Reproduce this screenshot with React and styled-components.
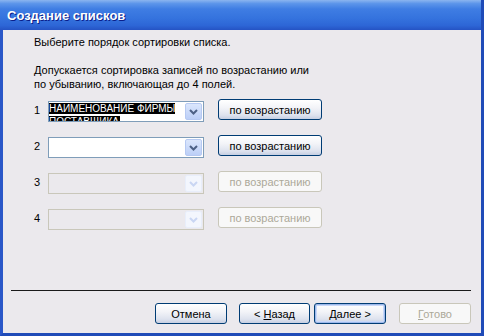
import styled, { createGlobalStyle, css } from "styled-components";

const GlobalStyle = createGlobalStyle`
  html, body {
    margin: 0;
    padding: 0;
    background: #ebe9ed;
  }
  body {
    font-family: "Liberation Sans", Arial, sans-serif;
    font-size: 11px;
    color: #000;
  }
`;

const Window = styled.div`
  width: 484px;
  height: 336px;
  display: flex;
  flex-direction: column;
  overflow: hidden;
`;

const TitleBar = styled.div`
  height: 30px;
  flex-shrink: 0;
  display: flex;
  align-items: center;
  padding-left: 7px;
  background: linear-gradient(
    to bottom,
    #8bb5ef 0%,
    #5c95ea 12%,
    #3f7de3 30%,
    #3573de 60%,
    #2d66d6 85%,
    #2553c4 100%
  );
  border-right: 3px solid #1f4bb8;
`;

const Title = styled.h1`
  margin: 0;
  font-family: "Liberation Sans", Arial, sans-serif;
  font-weight: bold;
  font-size: 13px;
  color: #fff;
  text-shadow: 1px 1px 0 #0a1e8a;
`;

const Body = styled.div`
  flex: 1;
  display: flex;
  flex-direction: column;
  background: #ebe9ed;
  border-left: 3px solid #2a57c8;
  border-right: 3px solid #1f4bb8;
  border-bottom: 3px solid #1f4bb8;
`;

const Content = styled.div`
  flex: 1;
  padding: 5px 0 0 31px;
`;

const Text = styled.p`
  margin: 0 0 ${(p) => p.$gap || 0}px;
  line-height: 14px;
`;

const Rows = styled.div`
  margin-top: 10px;
  display: flex;
  flex-direction: column;
  gap: 15px;
`;

const Row = styled.div`
  display: flex;
  align-items: flex-start;
  height: 21px;
`;

const Num = styled.span`
  width: 14px;
  padding-top: 3px;
`;

const Combo = styled.div`
  width: 156px;
  height: 21px;
  box-sizing: border-box;
  display: flex;
  border: 1px solid ${(p) => (p.$disabled ? "#c9c7ba" : "#7f9db9")};
  background: ${(p) => (p.$disabled ? "#ebe9ed" : "#fff")};
`;

const ComboText = styled.div`
  flex: 1;
  overflow: hidden;
  white-space: nowrap;
  line-height: 13px;
  font-size: 10px;
`;

const Selected = styled.span`
  background: #000;
  color: #fff;
  padding-right: 1px;
`;

const DropButton = styled.div`
  width: 17px;
  margin: 1px;
  box-sizing: border-box;
  display: flex;
  align-items: center;
  justify-content: center;
  border-radius: 2px;
  ${(p) =>
    p.$disabled
      ? css`
          background: #f3f6fd;
          border: 1px solid #e8eefb;
        `
      : css`
          background: linear-gradient(to bottom, #dbe6fc, #bccff7);
          border: 1px solid #b6c9f2;
        `}
`;

const Chevron = ({ disabled }) => (
  <svg width="9" height="6" viewBox="0 0 9 6">
    <path
      d="M1 1 L4.5 4.5 L8 1"
      fill="none"
      stroke={disabled ? "#c9d6f3" : "#4d6185"}
      strokeWidth="2"
    />
  </svg>
);

const Button = styled.button`
  box-sizing: border-box;
  height: 21px;
  width: ${(p) => p.$w || 72}px;
  margin-left: ${(p) => p.$ml || 0}px;
  padding: 0;
  font-family: "Liberation Sans", Arial, sans-serif;
  font-size: 11px;
  border-radius: 3px;
  cursor: default;
  ${(p) =>
    p.disabled
      ? css`
          background: #f8f8f8;
          border: 1px solid #c9c7ba;
          color: #aca899;
        `
      : css`
          background: linear-gradient(to bottom, #ffffff 0%, #f3f4f8 40%, #dde2ee 80%, #c6cfe2 100%);
          border: 1px solid #003c74;
          color: #000;
        `}
  ${(p) =>
    p.$default &&
    css`
      box-shadow: inset 0 0 0 1px #9db9eb, inset 0 0 0 2px #c9d8f8;
    `}
`;

const RowButton = styled(Button)`
  margin-left: 14px;
  margin-top: -2px;
  width: 104px;
`;

const Footer = styled.div`
  padding: 0 10px 0 8px;
`;

const Separator = styled.div`
  height: 1px;
  background: #1a1a1a;
`;

const ButtonBar = styled.div`
  display: flex;
  justify-content: flex-end;
  padding: 12px 0 9px;
`;

const U = styled.span`
  text-decoration: underline;
`;

const rows = [
  { n: 1, text: true },
  { n: 2 },
  { n: 3, disabled: true },
  { n: 4, disabled: true },
];

export default function App() {
  return (
    <Window>
      <GlobalStyle />
      <TitleBar>
        <Title>Создание списков</Title>
      </TitleBar>
      <Body>
        <Content>
          <Text $gap={14}>Выберите порядок сортировки списка.</Text>
          <Text>
            Допускается сортировка записей по возрастанию или
            <br />
            по убыванию, включающая до 4 полей.
          </Text>
          <Rows>
            {rows.map((r) => (
              <Row key={r.n}>
                <Num>{r.n}</Num>
                <Combo $disabled={r.disabled}>
                  <ComboText>
                    {r.text && (
                      <Selected>
                        НАИМЕНОВАНИЕ ФИРМЫ
                        <br />
                        ПОСТАВЩИКА
                      </Selected>
                    )}
                  </ComboText>
                  <DropButton $disabled={r.disabled}>
                    <Chevron disabled={r.disabled} />
                  </DropButton>
                </Combo>
                <RowButton disabled={r.disabled}>по возрастанию</RowButton>
              </Row>
            ))}
          </Rows>
        </Content>
        <Footer>
          <Separator />
          <ButtonBar>
            <Button>Отмена</Button>
            <Button $ml={12} $w={71}>
              &lt; <U>Н</U>азад
            </Button>
            <Button $ml={4} $default>
              <U>Д</U>алее &gt;
            </Button>
            <Button $ml={13} disabled>
              <U>Г</U>отово
            </Button>
          </ButtonBar>
        </Footer>
      </Body>
    </Window>
  );
}
